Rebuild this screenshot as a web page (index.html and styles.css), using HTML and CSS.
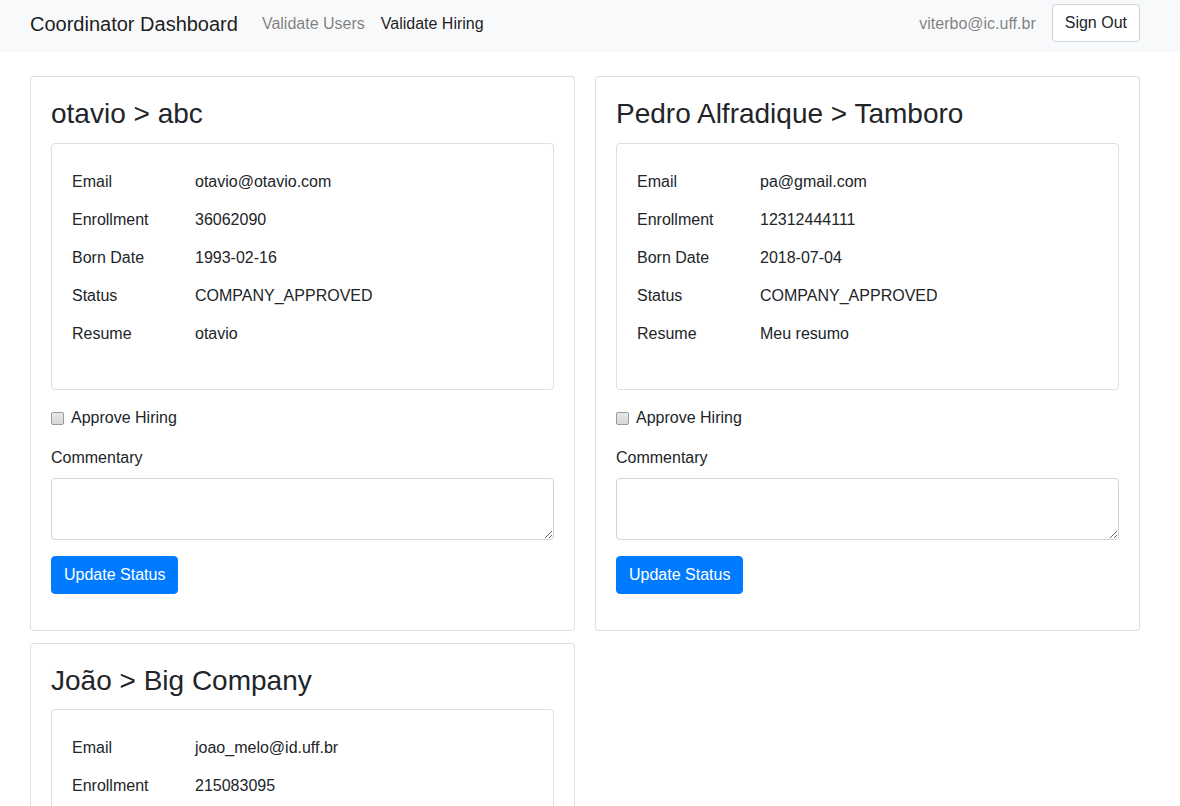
FILE: index.html
```html
<!DOCTYPE html>
<html lang="en">
<head>
<meta charset="utf-8">
<title>Coordinator Dashboard</title>
<link rel="stylesheet" href="styles.css">
</head>
<body>
<nav class="navbar">
  <a class="brand" href="#">Coordinator Dashboard</a>
  <ul class="nav">
    <li><a class="nav-link" href="#">Validate Users</a></li>
    <li><a class="nav-link active" href="#">Validate Hiring</a></li>
  </ul>
  <div class="nav-right">
    <span class="user">viterbo@ic.uff.br</span>
    <button class="btn-signout" type="button">Sign Out</button>
  </div>
</nav>

<main class="grid">
  <section class="card">
    <h3 class="card-title">otavio &gt; abc</h3>
    <div class="info">
      <div class="info-table">
        <div class="row"><span class="lbl">Email</span><span>otavio@otavio.com</span></div>
        <div class="row"><span class="lbl">Enrollment</span><span>36062090</span></div>
        <div class="row"><span class="lbl">Born Date</span><span>1993-02-16</span></div>
        <div class="row"><span class="lbl">Status</span><span>COMPANY_APPROVED</span></div>
        <div class="row"><span class="lbl">Resume</span><span>otavio</span></div>
      </div>
    </div>
    <form class="form">
      <div class="form-check"><input type="checkbox" id="a1"><label for="a1">Approve Hiring</label></div>
      <div class="form-group">
        <label class="field-label" for="c1">Commentary</label>
        <textarea id="c1" rows="2"></textarea>
      </div>
      <div class="form-group"><button class="btn-primary" type="button">Update Status</button></div>
    </form>
  </section>

  <section class="card">
    <h3 class="card-title">Pedro Alfradique &gt; Tamboro</h3>
    <div class="info">
      <div class="info-table">
        <div class="row"><span class="lbl">Email</span><span>pa@gmail.com</span></div>
        <div class="row"><span class="lbl">Enrollment</span><span>12312444111</span></div>
        <div class="row"><span class="lbl">Born Date</span><span>2018-07-04</span></div>
        <div class="row"><span class="lbl">Status</span><span>COMPANY_APPROVED</span></div>
        <div class="row"><span class="lbl">Resume</span><span>Meu resumo</span></div>
      </div>
    </div>
    <form class="form">
      <div class="form-check"><input type="checkbox" id="a2"><label for="a2">Approve Hiring</label></div>
      <div class="form-group">
        <label class="field-label" for="c2">Commentary</label>
        <textarea id="c2" rows="2"></textarea>
      </div>
      <div class="form-group"><button class="btn-primary" type="button">Update Status</button></div>
    </form>
  </section>

  <section class="card">
    <h3 class="card-title">João &gt; Big Company</h3>
    <div class="info">
      <div class="info-table">
        <div class="row"><span class="lbl">Email</span><span>joao_melo@id.uff.br</span></div>
        <div class="row"><span class="lbl">Enrollment</span><span>215083095</span></div>
        <div class="row"><span class="lbl">Born Date</span><span>1995-01-01</span></div>
        <div class="row"><span class="lbl">Status</span><span>COMPANY_APPROVED</span></div>
        <div class="row"><span class="lbl">Resume</span><span>joao</span></div>
      </div>
    </div>
    <form class="form">
      <div class="form-check"><input type="checkbox" id="a3"><label for="a3">Approve Hiring</label></div>
      <div class="form-group">
        <label class="field-label" for="c3">Commentary</label>
        <textarea id="c3" rows="2"></textarea>
      </div>
      <div class="form-group"><button class="btn-primary" type="button">Update Status</button></div>
    </form>
  </section>
</main>
</body>
</html>
```

FILE: styles.css
```css
* { box-sizing: border-box; }

html, body {
  margin: 0;
  padding: 0;
  background: #fff;
}

body {
  font-family: "Liberation Sans", Arial, sans-serif;
  font-size: 16px;
  line-height: 1.5;
  color: #212529;
}

a { text-decoration: none; }

.navbar {
  display: flex;
  align-items: center;
  height: 52px;
  padding: 0 40px 6px 30px;
  background: #f8f9fa;
}

.brand {
  font-size: 20px;
  line-height: 30px;
  padding-top: 2px;
  color: rgba(0, 0, 0, 0.9);
  margin-right: 16px;
  white-space: nowrap;
}

.nav {
  display: flex;
  list-style: none;
  margin: 0;
  padding: 2px 0 0;
}

.nav-link {
  display: block;
  padding: 0 8px;
  color: rgba(0, 0, 0, 0.5);
}

.nav-link.active { color: rgba(0, 0, 0, 0.9); }

.nav-right {
  margin-left: auto;
  display: flex;
  align-items: center;
  gap: 16px;
}

.user { color: rgba(0, 0, 0, 0.5); padding-top: 2px; }

.btn-signout {
  font-family: inherit;
  font-size: 16px;
  line-height: 24px;
  padding: 6px 12px;
  background: #fff;
  color: #212529;
  border: 1px solid #ced4da;
  border-radius: 4px;
}

.grid {
  display: grid;
  grid-template-columns: 545px 545px;
  column-gap: 20px;
  row-gap: 12px;
  align-items: start;
  width: 1110px;
  margin: 24px 0 0 30px;
}

.card {
  border: 1px solid rgba(0, 0, 0, 0.125);
  border-radius: 4px;
  padding: 20px;
  background: #fff;
}

.card-title {
  margin: 0 0 12px;
  font-size: 28px;
  font-weight: 400;
  line-height: 1.2;
}

.info {
  border: 1px solid rgba(0, 0, 0, 0.125);
  border-radius: 4px;
  padding: 19px 20px 20px;
  margin-bottom: 16px;
}

.info-table { margin-bottom: 16px; }

.row {
  display: grid;
  grid-template-columns: 123px 1fr;
  padding: 7px 0;
}

.form { margin: 0; }

.form-check {
  display: flex;
  align-items: flex-start;
  margin-bottom: 16px;
}

.form-check input {
  appearance: none;
  -webkit-appearance: none;
  width: 13px;
  height: 13px;
  margin: 6px 7px 0 0;
  border: 1px solid #9a9a9a;
  border-radius: 2px;
  background: linear-gradient(#e8e8e8, #d6d6d6);
}

.form-group { margin-bottom: 16px; }

.form-group:last-child { margin-bottom: 0; }

.field-label {
  display: block;
  margin-bottom: 8px;
}

textarea {
  display: block;
  width: 100%;
  height: 62px;
  padding: 6px 12px;
  font-family: inherit;
  font-size: 16px;
  line-height: 24px;
  border: 1px solid #ced4da;
  border-radius: 4px;
  color: #495057;
  resize: vertical;
}

.btn-primary {
  font-family: inherit;
  font-size: 16px;
  line-height: 24px;
  padding: 6px 12px;
  color: #fff;
  background: #007bff;
  border: 1px solid #007bff;
  border-radius: 4px;
}

.card .form { padding-bottom: 16px; }
```
